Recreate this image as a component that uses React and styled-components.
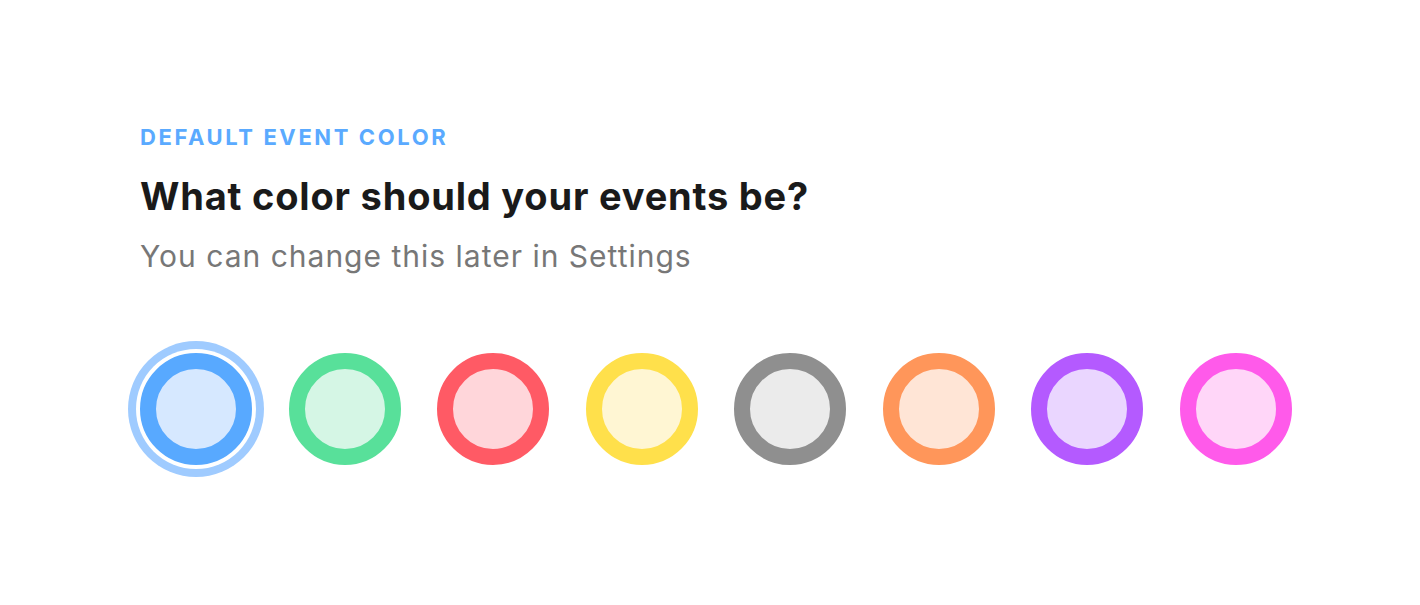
import styled, { createGlobalStyle } from "styled-components";

const GlobalStyle = createGlobalStyle`
  html, body {
    margin: 0;
    padding: 0;
    background: #fff;
    font-family: Inter, "Noto Sans", sans-serif;
  }
`;

const Page = styled.div`
  width: 1420px;
  height: 605px;
  box-sizing: border-box;
  padding: 123px 0 0 140px;
  display: flex;
  flex-direction: column;
`;

const Eyebrow = styled.div`
  font-size: 22px;
  line-height: 28px;
  font-weight: 700;
  letter-spacing: 2.6px;
  color: #5aaaff;
  text-transform: uppercase;
`;

const Title = styled.h1`
  margin: 22px 0 0;
  font-size: 38px;
  line-height: 46px;
  font-weight: 700;
  letter-spacing: 0.8px;
  color: #1a1a1a;
`;

const Subtitle = styled.p`
  margin: 19px 0 0;
  font-size: 30px;
  line-height: 36px;
  font-weight: 400;
  letter-spacing: 1px;
  color: #777777;
`;

const Swatches = styled.div`
  display: flex;
  gap: 36.5px;
  margin-top: 79px;
`;

const Swatch = styled.button`
  width: 112px;
  height: 112px;
  padding: 0;
  border-radius: 50%;
  border: 16px solid ${(p) => p.$ring};
  background: ${(p) => p.$fill};
  box-sizing: border-box;
  cursor: pointer;
  box-shadow: ${(p) =>
    p.$selected ? `0 0 0 4px #fff, 0 0 0 12px ${p.$halo}` : "none"};
`;

const colors = [
  { ring: "#58a9ff", fill: "#d6e8ff", halo: "#9fcbff" },
  { ring: "#58e09a", fill: "#d5f6e5" },
  { ring: "#ff5a65", fill: "#ffd6da" },
  { ring: "#ffe04b", fill: "#fff6d3" },
  { ring: "#8f8f8f", fill: "#ebebeb" },
  { ring: "#ff965a", fill: "#ffe5d6" },
  { ring: "#b45aff", fill: "#ead6ff" },
  { ring: "#ff5aea", fill: "#ffd6f8" },
];

export default function App() {
  return (
    <Page>
      <GlobalStyle />
      <Eyebrow>Default event color</Eyebrow>
      <Title>What color should your events be?</Title>
      <Subtitle>You can change this later in Settings</Subtitle>
      <Swatches>
        {colors.map((c, i) => (
          <Swatch
            key={c.ring}
            $ring={c.ring}
            $fill={c.fill}
            $halo={c.halo}
            $selected={i === 0}
            aria-label={`Color ${i + 1}`}
          />
        ))}
      </Swatches>
    </Page>
  );
}
